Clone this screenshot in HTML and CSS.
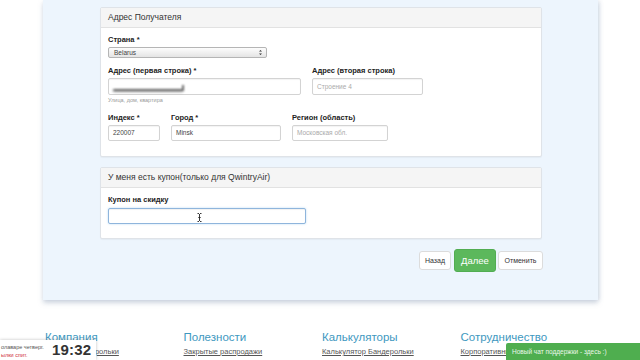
FILE: index.html
```html
<!DOCTYPE html>
<html lang="ru">
<head>
<meta charset="utf-8">
<link rel="stylesheet" href="styles.css">
</head>
<body>
<div class="main">
  <div class="container">
    <div class="panel">
      <div class="panel-heading">Адрес Получателя</div>
      <div class="panel-body">
        <div class="field">
          <label class="lbl">Страна *</label>
          <div class="select">
            <span>Belarus</span>
            <svg class="arrows" width="5" height="7" viewBox="0 0 5 7"><path d="M1 2.6 L2.5 1 L4 2.6 Z M1 4.4 L2.5 6 L4 4.4 Z" fill="#333"/></svg>
          </div>
        </div>
        <div class="row row-addr">
          <div class="field w193">
            <label class="lbl">Адрес (первая строка) *</label>
            <div class="input redacted-wrap"><span class="redacted"></span></div>
            <div class="help">Улица, дом, квартира</div>
          </div>
          <div class="field w111">
            <label class="lbl">Адрес (вторая строка)</label>
            <div class="input ph">Строение 4</div>
          </div>
        </div>
        <div class="row row-city">
          <div class="field w52">
            <label class="lbl">Индекс *</label>
            <div class="input short">220007</div>
          </div>
          <div class="field w110">
            <label class="lbl">Город *</label>
            <div class="input short">Minsk</div>
          </div>
          <div class="field w96">
            <label class="lbl">Регион (область)</label>
            <div class="input short ph">Московская обл.</div>
          </div>
        </div>
      </div>
    </div>

    <div class="panel panel2">
      <div class="panel-heading">У меня есть купон(только для QwintryAir)</div>
      <div class="panel-body body2">
        <div class="field w198">
          <label class="lbl">Купон на скидку</label>
          <div class="input short focus">
            <svg class="ibeam" width="5" height="9" viewBox="0 0 5 9"><path d="M0.5 0.5 H2 M3 0.5 H4.5 M2.5 1 V8 M0.5 8.5 H2 M3 8.5 H4.5 M1.3 4.5 H3.7" stroke="#222" stroke-width="0.9" fill="none"/></svg>
          </div>
        </div>
      </div>
    </div>

    <div class="actions">
      <button class="btn">Назад</button>
      <button class="btn btn-success">Далее</button>
      <button class="btn">Отменить</button>
    </div>
  </div>
</div>

<footer class="footer">
  <div class="col">
    <div class="fh">Компания</div>
    <a class="fl">Трекинг бандерольки</a>
  </div>
  <div class="col">
    <div class="fh">Полезности</div>
    <a class="fl">Закрытые распродажи</a>
  </div>
  <div class="col">
    <div class="fh">Калькуляторы</div>
    <a class="fl">Калькулятор Бандерольки</a>
  </div>
  <div class="col">
    <div class="fh">Сотрудничество</div>
    <a class="fl">Корпоративные клиенты</a>
  </div>
</footer>

<div class="clock-widget">
  <div class="clock-text">
    <div class="ct1">олаваре четверг.</div>
    <div class="ct2">ылки спит.</div>
  </div>
  <div class="clock">19:32</div>
</div>

<div class="chat">Новый чат поддержки - здесь :)</div>
</body>
</html>
```

FILE: styles.css
```css
* { box-sizing: border-box; }
html, body { margin: 0; padding: 0; }
body {
  width: 640px;
  height: 360px;
  overflow: hidden;
  background: #fff;
  font-family: "Liberation Sans", Arial, sans-serif;
  color: #333;
  position: relative;
}
.main { padding-left: 43px; }
.container {
  width: 555px;
  height: 300px;
  background: #edf5fd;
  padding: 7px 56px 0 57px;
  box-shadow: 0 3px 5px rgba(120, 140, 170, 0.35), 2px 0 4px rgba(150, 170, 200, 0.2);
}
.panel {
  background: #fff;
  border: 1px solid #dfe3e8;
  border-radius: 2px;
  width: 442px;
  box-shadow: 0 1px 1px rgba(0,0,0,0.04);
}
.panel2 { margin-top: 10px; }
.panel-heading {
  height: 20px;
  background: #f5f5f5;
  border-bottom: 1px solid #e2e2e2;
  padding: 0 7px;
  font-size: 8.5px;
  line-height: 19px;
  color: #333;
}
.panel-body {
  padding: 7px 7px 15px;
}
.body2 { padding: 7px 7px 14px; }
.field { display: flex; flex-direction: column; }
.lbl {
  font-size: 7.5px;
  font-weight: bold;
  line-height: 10px;
  height: 10px;
  color: #222;
}
.select {
  margin-top: 2px;
  width: 159px;
  height: 11px;
  border: 1px solid #b5b5b5;
  border-radius: 2px;
  background: linear-gradient(#fdfdfd, #e4e4e4);
  display: flex;
  align-items: center;
  justify-content: space-between;
  padding: 0 3px 0 5px;
  font-size: 6.5px;
  color: #444;
}
.arrows { display: block; }
.row { display: flex; gap: 11px; }
.row-addr { margin-top: 8px; }
.row-city { margin-top: 9px; }
.w193 { width: 193px; }
.w111 { width: 111px; }
.w52 { width: 52px; }
.w110 { width: 110px; }
.w96 { width: 96px; }
.w198 { width: 198px; }
.input {
  margin-top: 2px;
  height: 17px;
  border: 1px solid #d3d3d3;
  border-radius: 2px;
  background: #fff;
  box-shadow: inset 0 1px 1px rgba(0,0,0,0.05);
  padding: 0 4px;
  font-size: 6.5px;
  line-height: 15px;
  color: #444;
  position: relative;
}
.input.short { height: 16px; line-height: 14px; }
.ph { color: #aaa; }
.help {
  margin-top: 2px;
  font-size: 5.5px;
  line-height: 7px;
  color: #999;
}
.redacted {
  position: absolute;
  left: 4px;
  top: 10px;
  width: 70px;
  height: 2px;
  background: #666;
  filter: blur(0.8px);
  border-radius: 1px;
  box-shadow: 0 1px 2px rgba(0,0,0,0.4);
}
.redacted::after {
  content: "";
  position: absolute;
  right: -1px;
  bottom: 0;
  width: 2px;
  height: 6px;
  background: #666;
}
.focus {
  border-color: #8fb5dc;
  box-shadow: inset 0 1px 1px rgba(0,0,0,0.06), 0 0 2px rgba(102,175,233,0.5);
  margin-top: 3px;
}
.ibeam {
  position: absolute;
  left: 88px;
  top: 4px;
}
.actions {
  display: flex;
  justify-content: flex-end;
  align-items: center;
  gap: 2px;
  margin-top: 10px;
  width: 443px;
}
.btn {
  font-family: "Liberation Sans", Arial, sans-serif;
  font-size: 7px;
  height: 19px;
  padding: 0 5px;
  background: #fff;
  border: 1px solid #dcdcdc;
  border-radius: 3px;
  color: #333;
  margin: 0;
}
.btn:first-child { width: 32px; margin-right: 1px; }
.btn:last-child { width: 45px; }
.btn-success {
  height: 23px;
  width: 42px;
  background: #5cb85c;
  border-color: #52ad52;
  color: #fff;
  font-size: 9.5px;
}
.footer {
  display: flex;
  padding: 30px 0 0 45px;
}
.col { width: 138.5px; display: flex; flex-direction: column; }
.fh {
  font-size: 11.5px;
  color: #3e98c0;
  line-height: 14px;
}
.fl {
  margin-top: 3px;
  font-size: 7.5px;
  color: #555;
  text-decoration: underline;
  white-space: nowrap;
  line-height: 10px;
}
.clock-widget {
  position: absolute;
  left: 0;
  top: 340px;
  width: 96px;
  height: 20px;
  background: #fff;
  box-shadow: 0 0 3px rgba(0,0,0,0.25);
  display: flex;
  align-items: center;
}
.clock-text {
  width: 48px;
  display: flex;
  flex-direction: column;
  align-items: flex-start;
  font-size: 5.5px;
  line-height: 8px;
  white-space: nowrap;
  padding-left: 1px;
  margin-top: 2px;
}
.ct1 { color: #555; }
.ct2 { color: #d0313b; }
.clock {
  font-size: 15px;
  font-weight: bold;
  color: #333;
  margin-left: 4px;
  line-height: 18px;
  letter-spacing: 0.2px;
}
.chat {
  position: absolute;
  left: 506px;
  top: 343px;
  width: 134px;
  height: 17px;
  background: #4fae4f;
  color: #eaf7ea;
  font-size: 6.5px;
  line-height: 17px;
  padding-left: 6px;
  border-radius: 2px 0 0 0;
  white-space: nowrap;
}
```
